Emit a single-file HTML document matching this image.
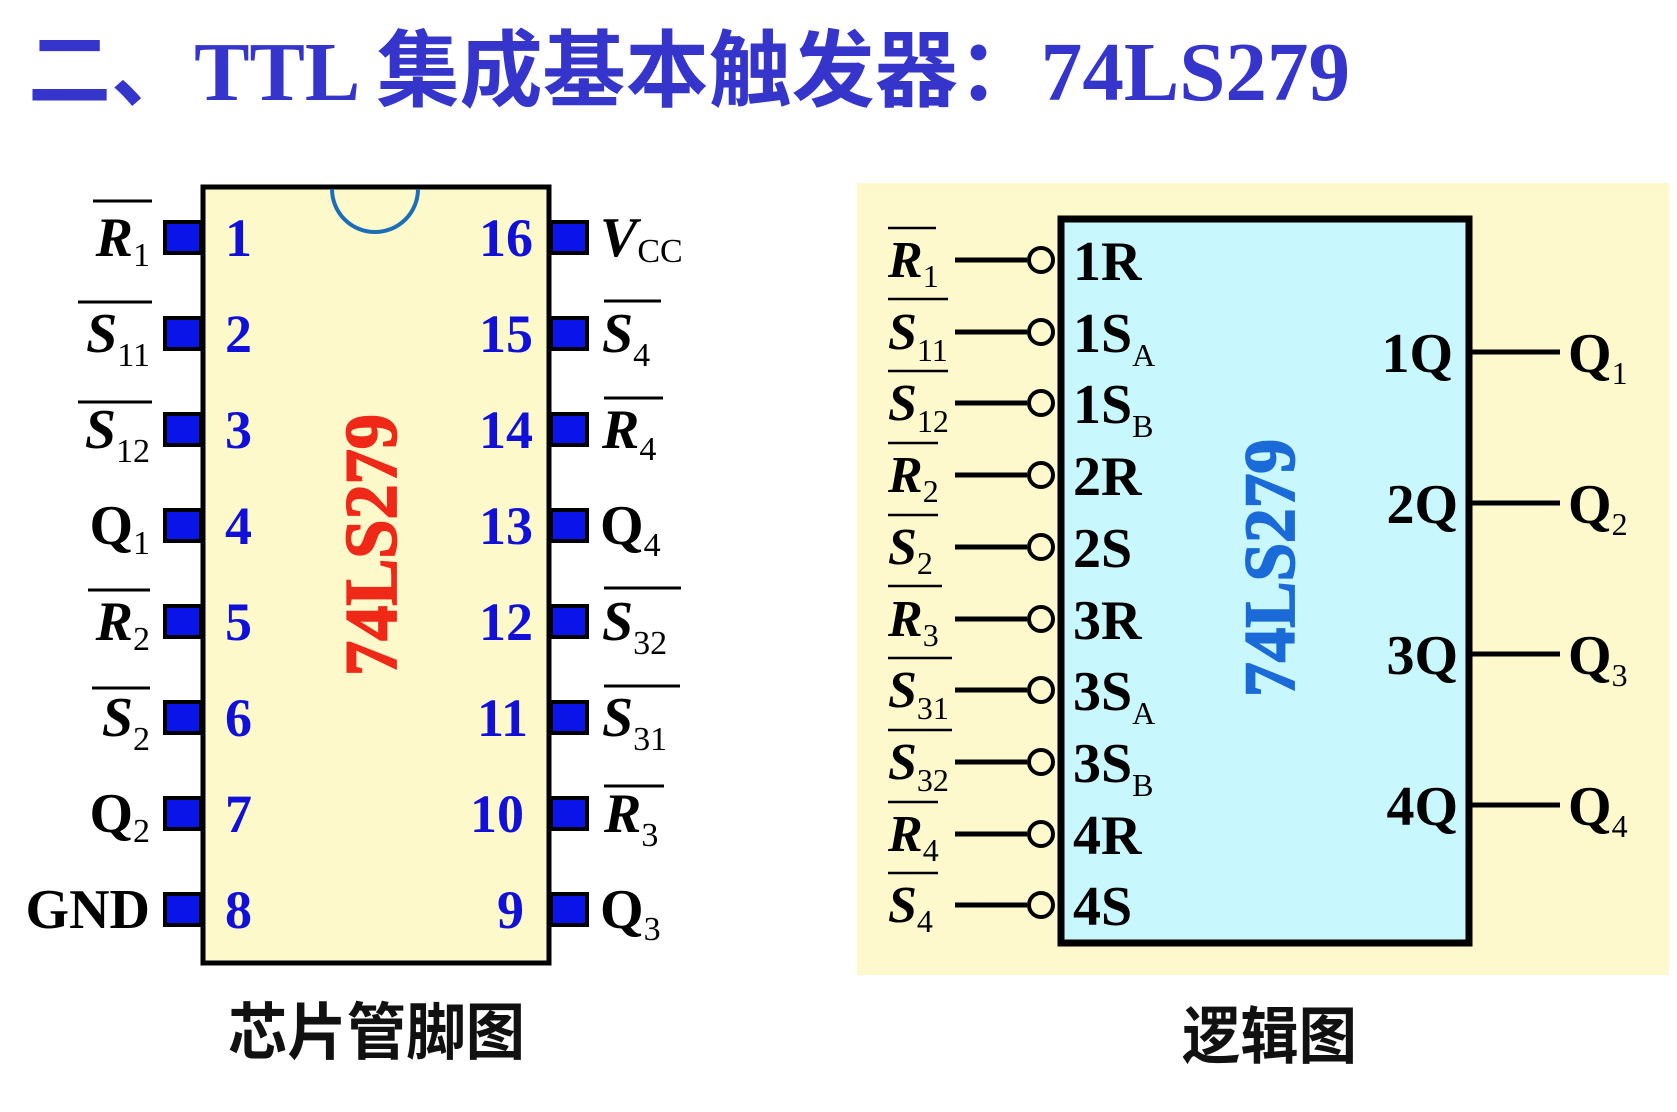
<!DOCTYPE html>
<html><head><meta charset="utf-8"><style>
html,body{margin:0;padding:0;background:#fff;}
svg{display:block;}
.t{font-family:"Liberation Serif","Noto Sans CJK SC",serif;font-weight:bold;}
.n{font-family:"Liberation Serif",serif;font-weight:bold;fill:#1010d8;font-size:54px;}
.l{font-family:"Liberation Serif",serif;font-weight:bold;fill:#000;font-size:56px;}
.i{font-style:italic;}
.s{font-size:34px;font-weight:normal;font-style:normal;}
.g{font-family:"Liberation Serif",serif;font-weight:bold;fill:#000;font-size:56px;}
.gl{font-family:"Liberation Serif",serif;font-weight:bold;fill:#000;font-size:52px;}
.gs{font-size:32px;font-weight:normal;font-style:normal;}
.cap{font-family:"Noto Sans CJK SC","WenQuanYi Zen Hei",sans-serif;font-weight:bold;font-size:62px;fill:#111;}
</style></head><body>
<svg width="1677" height="1112" viewBox="0 0 1677 1112" xmlns="http://www.w3.org/2000/svg">
<text class="t" x="28" y="100" font-size="84" fill="#3535cc" textLength="1322" lengthAdjust="spacingAndGlyphs">二、TTL 集成基本触发器：74LS279</text>

<!-- Chip -->
<rect x="203" y="187" width="346" height="776" fill="#fdf9ca" stroke="#000" stroke-width="5"/>
<path d="M332 189 A43 43 0 0 0 418 189" fill="none" stroke="#1a6fb8" stroke-width="4"/>
<g fill="#0a14e8" stroke="#000" stroke-width="4">
<rect x="165" y="222" width="36" height="31"/><rect x="165" y="318" width="36" height="31"/>
<rect x="165" y="414" width="36" height="31"/><rect x="165" y="510" width="36" height="31"/>
<rect x="165" y="606" width="36" height="31"/><rect x="165" y="702" width="36" height="31"/>
<rect x="165" y="798" width="36" height="31"/><rect x="165" y="894" width="36" height="31"/>
<rect x="551" y="222" width="36" height="31"/><rect x="551" y="318" width="36" height="31"/>
<rect x="551" y="414" width="36" height="31"/><rect x="551" y="510" width="36" height="31"/>
<rect x="551" y="606" width="36" height="31"/><rect x="551" y="702" width="36" height="31"/>
<rect x="551" y="798" width="36" height="31"/><rect x="551" y="894" width="36" height="31"/>
</g>
<g class="n">
<text x="225" y="256">1</text><text x="225" y="352">2</text><text x="225" y="448">3</text><text x="225" y="544">4</text>
<text x="225" y="640">5</text><text x="225" y="736">6</text><text x="225" y="832">7</text><text x="225" y="928">8</text>
<g text-anchor="end">
<text x="533" y="256">16</text><text x="533" y="352">15</text><text x="533" y="448">14</text><text x="533" y="544">13</text>
<text x="533" y="640">12</text><text x="528" y="736">11</text><text x="524" y="832">10</text><text x="524" y="928">9</text>
</g></g>
<text transform="translate(396,545) rotate(-90)" text-anchor="middle" font-family="Liberation Serif, serif" font-weight="bold" font-size="74" fill="#f02818" stroke="#f02818" stroke-width="1.8" textLength="262" lengthAdjust="spacingAndGlyphs">74LS279</text>

<!-- left labels -->
<g class="l" text-anchor="end">
<text x="150" y="256"><tspan class="i">R</tspan><tspan class="s" dy="10">1</tspan></text>
<text x="150" y="352"><tspan class="i">S</tspan><tspan class="s" dy="14">11</tspan></text>
<text x="150" y="448"><tspan class="i">S</tspan><tspan class="s" dy="14">12</tspan></text>
<text x="150" y="544">Q<tspan class="s" dy="10">1</tspan></text>
<text x="150" y="640"><tspan class="i">R</tspan><tspan class="s" dy="10">2</tspan></text>
<text x="150" y="736"><tspan class="i">S</tspan><tspan class="s" dy="14">2</tspan></text>
<text x="150" y="832">Q<tspan class="s" dy="10">2</tspan></text>
<text x="150" y="928">GND</text>
</g>
<g stroke="#000" stroke-width="3">
<line x1="93" y1="201" x2="152" y2="201"/>
<line x1="78" y1="302" x2="152" y2="302"/>
<line x1="78" y1="402" x2="152" y2="402"/>
<line x1="88" y1="590" x2="150" y2="590"/>
<line x1="92" y1="688" x2="150" y2="688"/>
<line x1="604" y1="301" x2="661" y2="301"/>
<line x1="604" y1="398" x2="663" y2="398"/>
<line x1="604" y1="588" x2="681" y2="588"/>
<line x1="604" y1="686" x2="680" y2="686"/>
<line x1="604" y1="786" x2="664" y2="786"/>
</g>
<!-- right labels -->
<g class="l">
<text x="600" y="256"><tspan class="i">V</tspan><tspan class="s" dy="6">CC</tspan></text>
<text x="602" y="352"><tspan class="i">S</tspan><tspan class="s" dy="14">4</tspan></text>
<text x="602" y="448"><tspan class="i">R</tspan><tspan class="s" dy="12">4</tspan></text>
<text x="600" y="544">Q<tspan class="s" dy="12">4</tspan></text>
<text x="602" y="640"><tspan class="i">S</tspan><tspan class="s" dy="14">32</tspan></text>
<text x="602" y="736"><tspan class="i">S</tspan><tspan class="s" dy="14">31</tspan></text>
<text x="604" y="832"><tspan class="i">R</tspan><tspan class="s" dy="14">3</tspan></text>
<text x="600" y="928">Q<tspan class="s" dy="12">3</tspan></text>
</g>

<!-- Logic diagram -->
<rect x="857" y="183" width="812" height="792" fill="#fef9cc"/>
<rect x="1061" y="219" width="408" height="724" fill="#c8f7fd" stroke="#000" stroke-width="7"/>
<text transform="translate(1294,568) rotate(-90)" text-anchor="middle" font-family="Liberation Serif, serif" font-weight="bold" font-size="72" fill="#1a6ad8" stroke="#1a6ad8" stroke-width="1.8" textLength="258" lengthAdjust="spacingAndGlyphs">74LS279</text>
<g stroke="#000" stroke-width="5" fill="#fef9cc">
<line x1="955" y1="260" x2="1027" y2="260"/><circle cx="1041" cy="260" r="12" stroke-width="4"/>
<line x1="955" y1="332" x2="1027" y2="332"/><circle cx="1041" cy="332" r="12" stroke-width="4"/>
<line x1="955" y1="403" x2="1027" y2="403"/><circle cx="1041" cy="403" r="12" stroke-width="4"/>
<line x1="955" y1="475" x2="1027" y2="475"/><circle cx="1041" cy="475" r="12" stroke-width="4"/>
<line x1="955" y1="547" x2="1027" y2="547"/><circle cx="1041" cy="547" r="12" stroke-width="4"/>
<line x1="955" y1="619" x2="1027" y2="619"/><circle cx="1041" cy="619" r="12" stroke-width="4"/>
<line x1="955" y1="690" x2="1027" y2="690"/><circle cx="1041" cy="690" r="12" stroke-width="4"/>
<line x1="955" y1="762" x2="1027" y2="762"/><circle cx="1041" cy="762" r="12" stroke-width="4"/>
<line x1="955" y1="834" x2="1027" y2="834"/><circle cx="1041" cy="834" r="12" stroke-width="4"/>
<line x1="955" y1="905" x2="1027" y2="905"/><circle cx="1041" cy="905" r="12" stroke-width="4"/>
<line x1="1472" y1="352" x2="1560" y2="352"/>
<line x1="1472" y1="503" x2="1560" y2="503"/>
<line x1="1472" y1="654" x2="1560" y2="654"/>
<line x1="1472" y1="805" x2="1560" y2="805"/>
</g>
<g class="g">
<text x="1073" y="280">1R</text>
<text x="1073" y="352">1S<tspan class="gs" dy="14">A</tspan></text>
<text x="1073" y="423">1S<tspan class="gs" dy="14">B</tspan></text>
<text x="1073" y="495">2R</text>
<text x="1073" y="567">2S</text>
<text x="1073" y="639">3R</text>
<text x="1073" y="710">3S<tspan class="gs" dy="14">A</tspan></text>
<text x="1073" y="782">3S<tspan class="gs" dy="14">B</tspan></text>
<text x="1073" y="854">4R</text>
<text x="1073" y="925">4S</text>
<g text-anchor="end">
<text x="1453" y="372">1Q</text><text x="1458" y="523">2Q</text>
<text x="1458" y="674">3Q</text><text x="1458" y="825">4Q</text>
</g>
<text x="1568" y="372">Q<tspan class="gs" dy="12">1</tspan></text>
<text x="1568" y="523">Q<tspan class="gs" dy="12">2</tspan></text>
<text x="1568" y="674">Q<tspan class="gs" dy="12">3</tspan></text>
<text x="1568" y="825">Q<tspan class="gs" dy="12">4</tspan></text>
</g>
<g class="gl" font-size="50">
<text x="888" y="277"><tspan class="i">R</tspan><tspan class="gs" dy="10" font-size="28">1</tspan></text>
<text x="888" y="349"><tspan class="i">S</tspan><tspan class="gs" dy="12" font-size="28">11</tspan></text>
<text x="888" y="420"><tspan class="i">S</tspan><tspan class="gs" dy="12" font-size="28">12</tspan></text>
<text x="888" y="492"><tspan class="i">R</tspan><tspan class="gs" dy="10" font-size="28">2</tspan></text>
<text x="888" y="564"><tspan class="i">S</tspan><tspan class="gs" dy="10" font-size="28">2</tspan></text>
<text x="888" y="636"><tspan class="i">R</tspan><tspan class="gs" dy="10" font-size="28">3</tspan></text>
<text x="888" y="707"><tspan class="i">S</tspan><tspan class="gs" dy="12" font-size="28">31</tspan></text>
<text x="888" y="779"><tspan class="i">S</tspan><tspan class="gs" dy="12" font-size="28">32</tspan></text>
<text x="888" y="851"><tspan class="i">R</tspan><tspan class="gs" dy="10" font-size="28">4</tspan></text>
<text x="888" y="922"><tspan class="i">S</tspan><tspan class="gs" dy="10" font-size="28">4</tspan></text>
</g>
<g stroke="#000" stroke-width="2.5">
<line x1="888" y1="228" x2="936" y2="228"/>
<line x1="888" y1="299" x2="948" y2="299"/>
<line x1="888" y1="371" x2="948" y2="371"/>
<line x1="888" y1="443" x2="938" y2="443"/>
<line x1="888" y1="515" x2="938" y2="515"/>
<line x1="888" y1="586" x2="942" y2="586"/>
<line x1="888" y1="658" x2="952" y2="658"/>
<line x1="888" y1="730" x2="952" y2="730"/>
<line x1="888" y1="802" x2="938" y2="802"/>
<line x1="888" y1="873" x2="938" y2="873"/>
</g>

<text class="cap" x="228" y="1054" textLength="297" lengthAdjust="spacingAndGlyphs">芯片管脚图</text>
<text class="cap" x="1182" y="1058" textLength="175" lengthAdjust="spacingAndGlyphs">逻辑图</text>
</svg>
</body></html>
